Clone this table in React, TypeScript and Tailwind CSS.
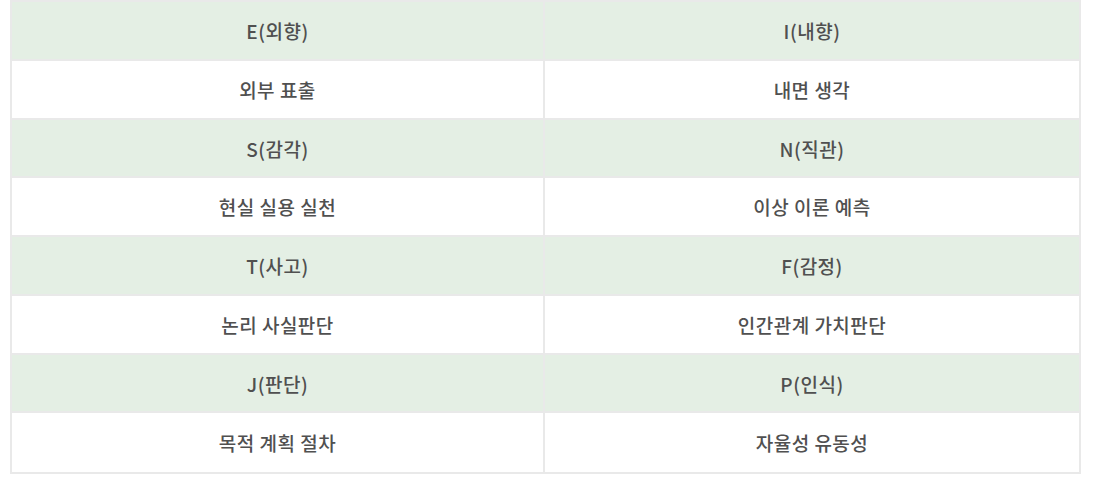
import React from "react";

const rows: [string, string][] = [
  ["E(외향)", "I(내향)"],
  ["외부 표출", "내면 생각"],
  ["S(감각)", "N(직관)"],
  ["현실 실용 실천", "이상 이론 예측"],
  ["T(사고)", "F(감정)"],
  ["논리 사실판단", "인간관계 가치판단"],
  ["J(판단)", "P(인식)"],
  ["목적 계획 절차", "자율성 유동성"],
];

export default function App() {
  return (
    <div
      className="w-[1097px] h-[503px] bg-white pl-[10px]"
      style={{ fontFamily: '"Noto Sans CJK KR", "Noto Sans", sans-serif' }}
    >
      <div className="w-[1071px] border-2 border-[#e9e9e9]">
        {rows.map((r, i) => (
          <div
            key={i}
            className={`grid grid-cols-[533px_1fr] h-[58.75px] ${
              i < rows.length - 1 ? "border-b-2 border-[#e9e9e9]" : ""
            } ${i % 2 === 0 ? "bg-[#e4efe4]" : "bg-white"}`}
          >
            <div className="flex items-center justify-center border-r-2 border-[#e9e9e9] pt-[2px] text-[19px] tracking-[0.5px] font-medium text-[#505050]">
              {r[0]}
            </div>
            <div className="flex items-center justify-center pt-[2px] text-[19px] tracking-[0.5px] font-medium text-[#505050]">
              {r[1]}
            </div>
          </div>
        ))}
      </div>
    </div>
  );
}
